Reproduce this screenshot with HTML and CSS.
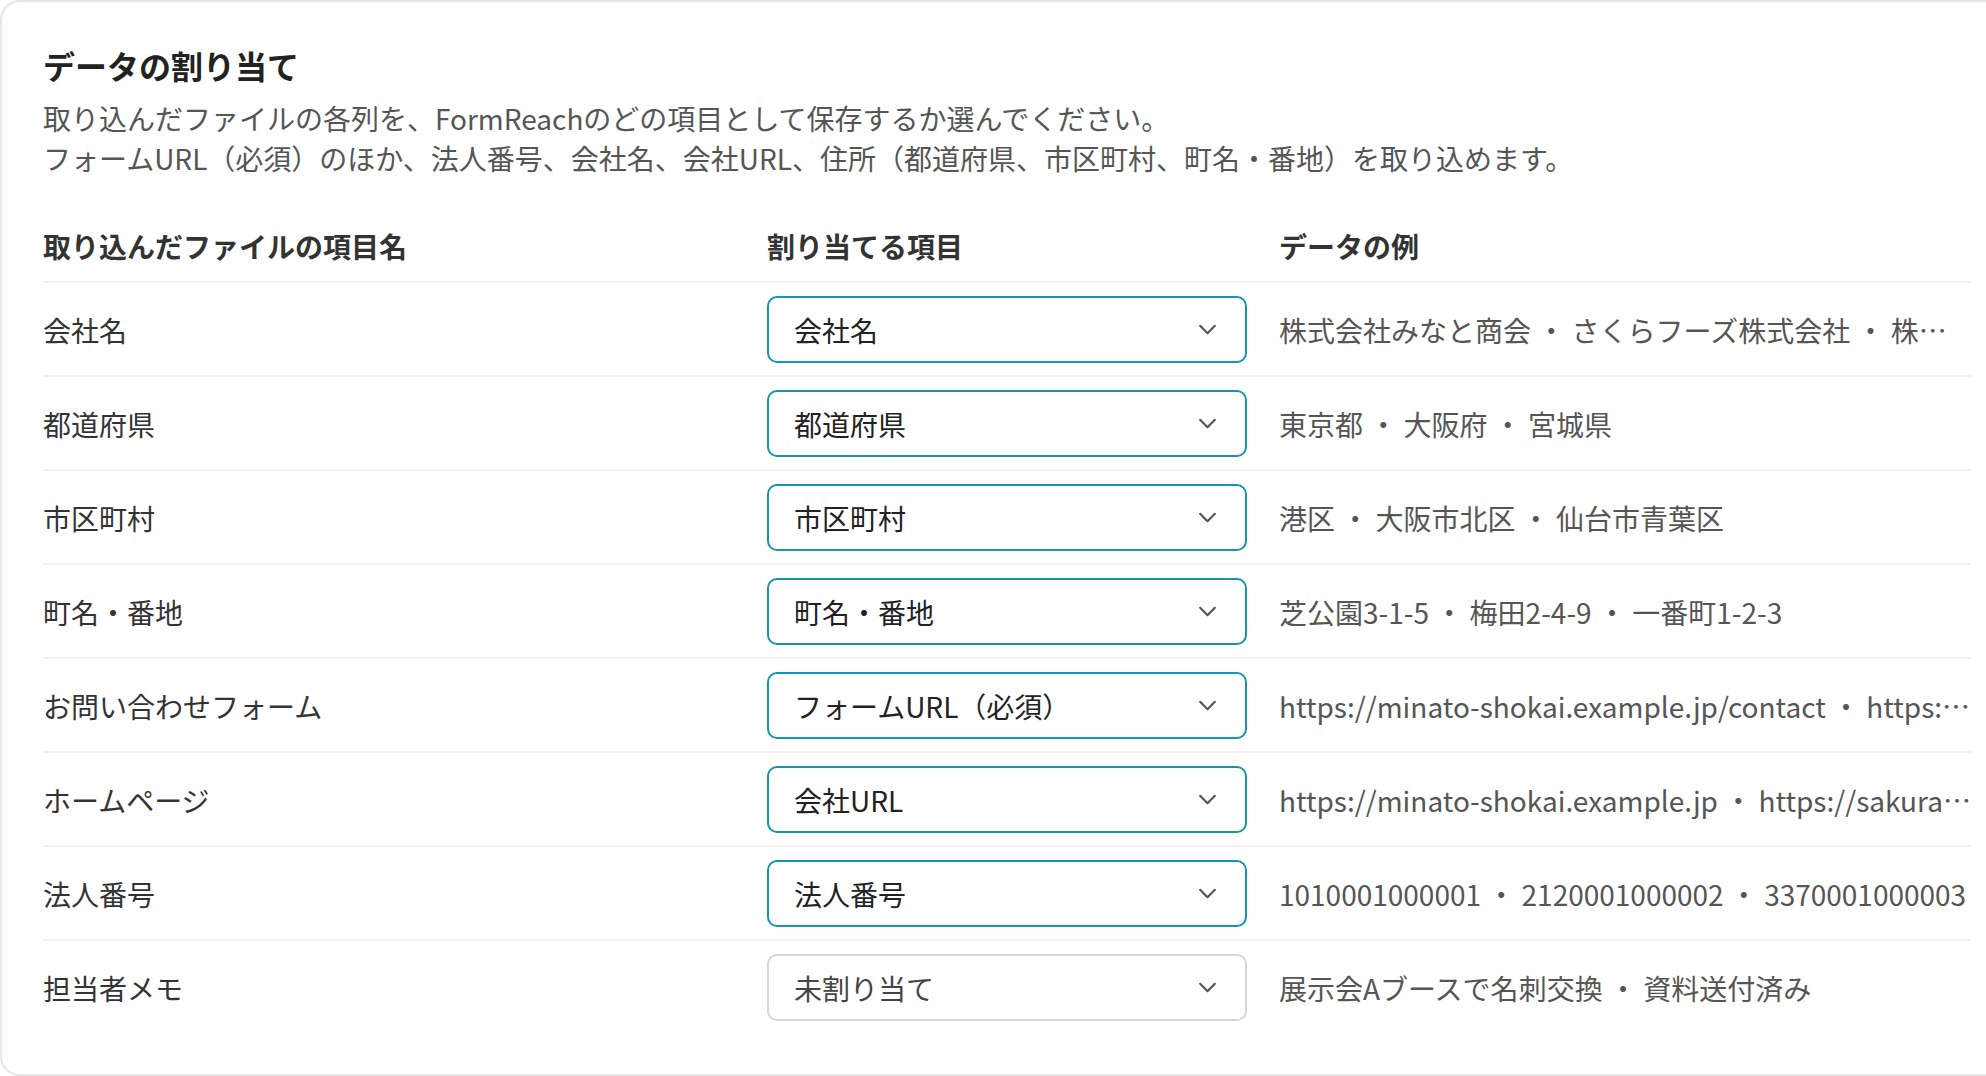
FILE: index.html
```html
<!DOCTYPE html>
<html lang="ja">
<head>
<meta charset="utf-8">
<title>データの割り当て</title>
<link rel="stylesheet" href="styles.css">
</head>
<body>
<section class="card">
  <h2 class="title">データの割り当て</h2>
  <p class="desc">取り込んだファイルの各列を、FormReachのどの項目として保存するか選んでください。<br>フォームURL（必須）のほか、法人番号、会社名、会社URL、住所（都道府県、市区町村、町名・番地）を取り込めます。</p>
  <div class="table">
    <div class="row head">
      <div class="cell">取り込んだファイルの項目名</div>
      <div class="cell">割り当てる項目</div>
      <div class="cell">データの例</div>
    </div>
    <div class="row">
      <div class="cell label">会社名</div>
      <div class="cell"><div class="select"><span>会社名</span><svg class="chev" viewBox="0 0 20 12"><path d="M2 2l8 8 8-8"/></svg></div></div>
      <div class="cell example">株式会社みなと商会 ・ さくらフーズ株式会社 ・ 株式会社仙台テック</div>
    </div>
    <div class="row">
      <div class="cell label">都道府県</div>
      <div class="cell"><div class="select"><span>都道府県</span><svg class="chev" viewBox="0 0 20 12"><path d="M2 2l8 8 8-8"/></svg></div></div>
      <div class="cell example">東京都 ・ 大阪府 ・ 宮城県</div>
    </div>
    <div class="row">
      <div class="cell label">市区町村</div>
      <div class="cell"><div class="select"><span>市区町村</span><svg class="chev" viewBox="0 0 20 12"><path d="M2 2l8 8 8-8"/></svg></div></div>
      <div class="cell example">港区 ・ 大阪市北区 ・ 仙台市青葉区</div>
    </div>
    <div class="row">
      <div class="cell label">町名・番地</div>
      <div class="cell"><div class="select"><span>町名・番地</span><svg class="chev" viewBox="0 0 20 12"><path d="M2 2l8 8 8-8"/></svg></div></div>
      <div class="cell example">芝公園3-1-5 ・ 梅田2-4-9 ・ 一番町1-2-3</div>
    </div>
    <div class="row">
      <div class="cell label">お問い合わせフォーム</div>
      <div class="cell"><div class="select"><span>フォームURL（必須）</span><svg class="chev" viewBox="0 0 20 12"><path d="M2 2l8 8 8-8"/></svg></div></div>
      <div class="cell example">https://minato-shokai.example.jp/contact ・ https://sakura-foods.example.jp/inquiry</div>
    </div>
    <div class="row">
      <div class="cell label">ホームページ</div>
      <div class="cell"><div class="select"><span>会社URL</span><svg class="chev" viewBox="0 0 20 12"><path d="M2 2l8 8 8-8"/></svg></div></div>
      <div class="cell example">https://minato-shokai.example.jp ・ https://sakura-foods.example.jp</div>
    </div>
    <div class="row">
      <div class="cell label">法人番号</div>
      <div class="cell"><div class="select"><span>法人番号</span><svg class="chev" viewBox="0 0 20 12"><path d="M2 2l8 8 8-8"/></svg></div></div>
      <div class="cell example">1010001000001 ・ 2120001000002 ・ 3370001000003</div>
    </div>
    <div class="row">
      <div class="cell label">担当者メモ</div>
      <div class="cell"><div class="select empty"><span>未割り当て</span><svg class="chev" viewBox="0 0 20 12"><path d="M2 2l8 8 8-8"/></svg></div></div>
      <div class="cell example">展示会Aブースで名刺交換 ・ 資料送付済み</div>
    </div>
  </div>
</section>
</body>
</html>
```

FILE: styles.css
```css
html, body {
  margin: 0;
  padding: 0;
  overflow: hidden;
  background: #ffffff;
}

body {
  font-family: "Noto Sans CJK JP", "Noto Sans", sans-serif;
  color: #333333;
}

.card {
  box-sizing: border-box;
  width: 2014px;
  height: 1076px;
  border: 2px solid #e6e6e6;
  border-radius: 20px;
  padding: 40px 41px 0 41px;
  background: #ffffff;
}

.title {
  margin: 0;
  font-size: 32px;
  font-weight: 700;
  line-height: 46px;
  color: #222222;
}

.desc {
  margin: 10px 0 0 0;
  font-size: 28px;
  line-height: 40px;
  color: #555555;
}

.table {
  margin-top: 48px;
}

.row {
  display: grid;
  grid-template-columns: 1fr 480px 1fr;
  column-gap: 32px;
  align-items: center;
  border-top: 2px solid #f1f1f1;
  padding: 13px 0 12px 0;
  font-size: 28px;
  line-height: 40px;
}

.row.head {
  border-top: none;
  padding: 0 0 15px 0;
  font-weight: 700;
  color: #333333;
}

.cell {
  min-width: 0;
}

.label {
  color: #333333;
}

.select {
  box-sizing: border-box;
  height: 67px;
  border: 2px solid #1893b1;
  border-radius: 10px;
  display: flex;
  align-items: center;
  justify-content: space-between;
  padding: 0 28px 0 25px;
  color: #222222;
  background: #ffffff;
}

.select.empty {
  border-color: #d6d6d6;
  color: #444444;
}

.chev {
  width: 19px;
  height: 11px;
  fill: none;
  stroke: #555555;
  stroke-width: 2.4;
  stroke-linecap: round;
  stroke-linejoin: round;
}

.example {
  color: #555555;
  white-space: nowrap;
  overflow: hidden;
  text-overflow: ellipsis;
}
```
